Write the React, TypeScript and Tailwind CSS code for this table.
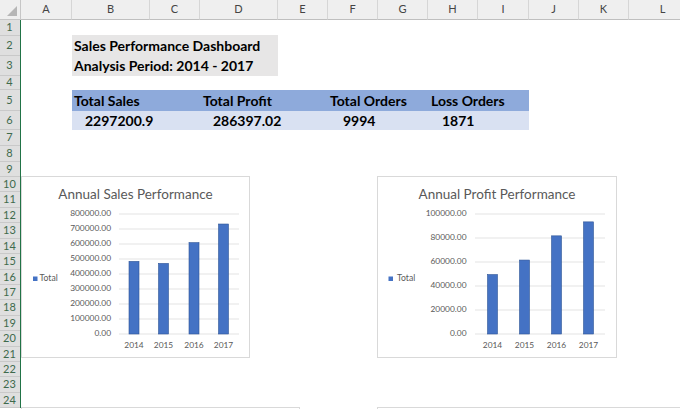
const COLS = ['A', 'B', 'C', 'D', 'E', 'F', 'G', 'H', 'I', 'J', 'K', 'L']
const COL_START = [
  'col-start-2',
  'col-start-3',
  'col-start-4',
  'col-start-5',
  'col-start-6',
  'col-start-7',
  'col-start-8',
  'col-start-9',
  'col-start-10',
  'col-start-11',
  'col-start-12',
  'col-start-13',
]
const ROWS = Array.from({ length: 24 }, (_, i) => i + 1)

type ChartProps = {
  title: string
  width: number
  max: number
  ticks: number
  values: number[]
  labelX: number
  gridFrom: number
  gridTo: number
  barX: number[]
  legendX: number
  legendTextX: number
}

const YEARS = ['2014', '2015', '2016', '2017']

function BarChart({
  title,
  width,
  max,
  ticks,
  values,
  labelX,
  gridFrom,
  gridTo,
  barX,
  legendX,
  legendTextX,
}: ChartProps) {
  const top = 10
  const bottom = 130
  const step = (bottom - top) / ticks

  return (
    <div
      className="flex h-[182px] flex-col border border-[#d9d9d9] bg-white"
      style={{ width }}
    >
      <div className="h-[27px] pt-[7px] text-center text-[13.5px] leading-[20px] text-[#595959]">
        {title}
      </div>
      <svg width={width - 2} height={153} className="block">
        <rect x={legendX} y={72.5} width={4.5} height={4.5} fill="#4472c4" />
        <text x={legendTextX} y={75} fontSize={8.6} fill="#595959" dominantBaseline="middle">
          Total
        </text>
        {Array.from({ length: ticks + 1 }, (_, i) => {
          const y = top + i * step
          const v = max - (max / ticks) * i
          return (
            <g key={i}>
              <line x1={gridFrom} x2={gridTo} y1={y} y2={y} stroke="#d9d9d9" strokeWidth={0.75} />
              <text
                x={labelX}
                y={y}
                fontSize={8.4}
                fill="#595959"
                textAnchor="end"
                dominantBaseline="middle"
              >
                {v.toFixed(2)}
              </text>
            </g>
          )
        })}
        {values.map((v, i) => {
          const h = (v / max) * (bottom - top)
          return (
            <rect
              key={i}
              x={barX[i] - 5}
              y={bottom - h}
              width={10}
              height={h}
              fill="#4472c4"
              stroke="#2f5597"
              strokeWidth={0.6}
            />
          )
        })}
        {YEARS.map((y, i) => (
          <text
            key={y}
            x={barX[i]}
            y={142}
            fontSize={8.4}
            fill="#595959"
            textAnchor="middle"
            dominantBaseline="middle"
          >
            {y}
          </text>
        ))}
      </svg>
    </div>
  )
}

export default function App() {
  return (
    <div className="h-[409px] w-[680px] overflow-hidden bg-white font-['Lato',sans-serif]">
      <div className="grid grid-cols-[21px_51px_78px_50px_78px_50px_50px_50px_50px_51px_50px_50px_1fr] grid-rows-[20px_16px_20px_20px_14px_21px_19px_16px_16px_15px_repeat(15,15.43px)]">
        {/* corner */}
        <div className="relative col-start-1 row-start-1 border-b border-r border-[#c6c6c6] bg-[#efefef]">
          <svg width="10" height="10" className="absolute bottom-[3px] right-[3px]">
            <polygon points="10,0 10,10 0,10" fill="#b6b6b6" />
          </svg>
        </div>
        {COLS.map((c, i) => (
          <div
            key={c}
            className={`${COL_START[i]} row-start-1 flex items-center justify-center border-b border-r border-b-[#bfbfbf] border-r-[#d6d6d6] bg-[#efefef] text-[11px] text-[#444]`}
          >
            {c}
          </div>
        ))}

        {/* row headers */}
        <div className="col-start-1 row-start-2 row-span-24 flex flex-col border-r border-[#217346] bg-[#dfdfdf]">
          {ROWS.map((r) => (
            <div
              key={r}
              className={`flex shrink-0 items-center justify-center border-b border-[#c9c9c9] pr-px text-[11px] text-[#3e6a4c] ${
                r === 1
                  ? 'h-[16px]'
                  : r === 2 || r === 3
                    ? 'h-[20px]'
                    : r === 4
                      ? 'h-[14px]'
                      : r === 5
                        ? 'h-[21px]'
                        : r === 6
                          ? 'h-[19px]'
                          : r === 7 || r === 8
                            ? 'h-[16px]'
                            : r === 9
                              ? 'h-[15px]'
                              : 'h-[15.43px]'
              }`}
            >
              {r}
            </div>
          ))}
        </div>

        {/* title block */}
        <div className="col-start-3 col-span-3 row-start-3 row-span-2 -mt-px flex flex-col bg-[#e7e6e6] pl-[2px] text-[14px] font-bold text-black">
          <div className="flex h-[20px] items-center">Sales Performance Dashboard</div>
          <div className="flex h-[20px] items-center">Analysis Period: 2014 - 2017</div>
        </div>

        {/* KPI table */}
        <div className="col-start-3 col-span-8 row-start-6 row-span-2 grid grid-cols-[128px_128px_100px_1fr] grid-rows-[21px_19px] text-[14px] font-bold text-black">
          <div className="flex items-center bg-[#8eaadb] pl-[2px]">Total Sales</div>
          <div className="flex items-center bg-[#8eaadb] pl-[3px]">Total Profit</div>
          <div className="flex items-center bg-[#8eaadb] pl-[2px]">Total Orders</div>
          <div className="flex items-center bg-[#8eaadb] pl-[3px]">Loss Orders</div>
          <div className="flex items-center bg-[#d9e1f2] pl-[13px]">2297200.9</div>
          <div className="flex items-center bg-[#d9e1f2] pl-[13px]">286397.02</div>
          <div className="flex items-center bg-[#d9e1f2] pl-[15px]">9994</div>
          <div className="flex items-center bg-[#d9e1f2] pl-[14px]">1871</div>
        </div>

        {/* charts */}
        <div className="col-start-2 col-span-5 row-start-11 row-span-12 -mt-px self-start">
          <BarChart
            title="Annual Sales Performance"
            width={229}
            max={800000}
            ticks={8}
            values={[484247.5, 470532.5, 609205.6, 733215.3]}
            labelX={89}
            gridFrom={97}
            gridTo={217}
            barX={[112, 141.5, 172, 201.5]}
            legendX={11}
            legendTextX={17.5}
          />
        </div>
        <div className="col-start-8 col-span-6 row-start-11 row-span-12 -ml-px -mt-px self-start">
          <BarChart
            title="Annual Profit Performance"
            width={240}
            max={100000}
            ticks={5}
            values={[49543.97, 61618.6, 81795.17, 93439.27]}
            labelX={88.5}
            gridFrom={97}
            gridTo={227}
            barX={[114.5, 146.5, 178.5, 210.5]}
            legendX={10.5}
            legendTextX={19}
          />
        </div>

        {/* next charts, cut off at the bottom */}
        <div className="col-start-2 col-span-5 row-start-25 mt-[14px] h-[40px] w-[279px] border border-[#d9d9d9] bg-white" />
        <div className="col-start-8 col-span-6 row-start-25 -ml-px mt-[14px] h-[40px] w-[320px] border border-[#d9d9d9] bg-white" />
      </div>
    </div>
  )
}
